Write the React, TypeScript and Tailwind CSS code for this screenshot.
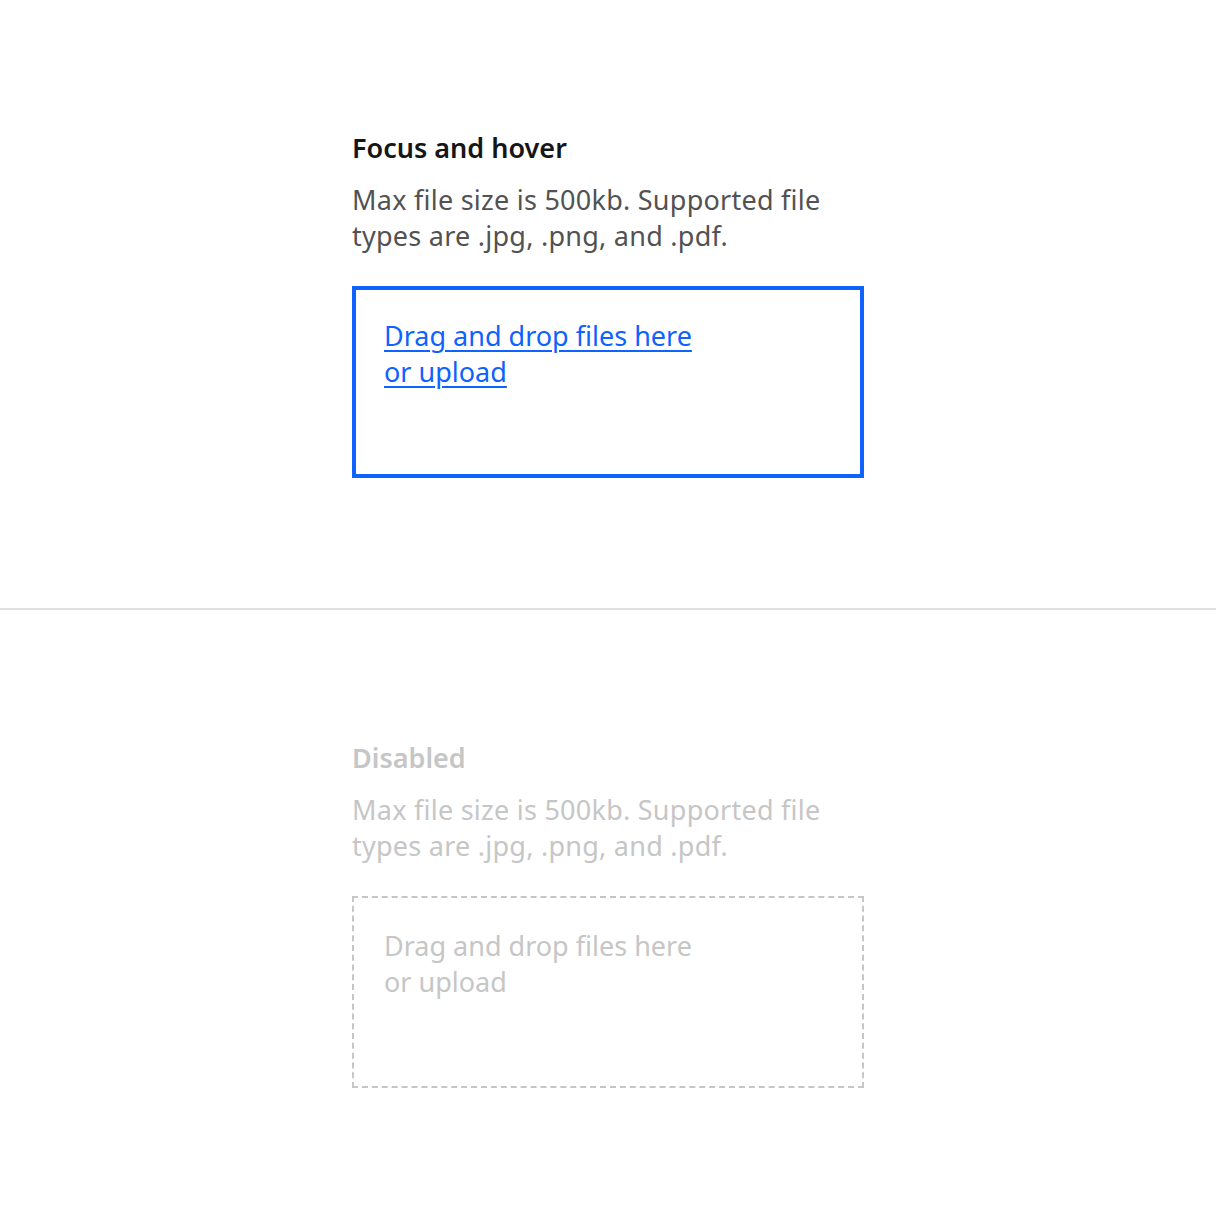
export default function App() {
  return (
    <div className="min-h-screen w-full bg-white font-['Noto_Sans',sans-serif]">
      <section className="h-[608px] pl-[352px] pt-[130px]">
        <h2 className="text-[27px] leading-[36px] font-semibold text-[#161616]">
          Focus and hover
        </h2>
        <p className="mt-4 text-[27px] leading-[36px] tracking-[0.25px] text-[#525252]">
          Max file size is 500kb. Supported file
          <br />
          types are .jpg, .png, and .pdf.
        </p>
        <div className="mt-8 h-[192px] w-[512px] border-[4px] border-[#0f62fe] px-7 pt-7">
          <a
            href="#"
            className="text-[27px] leading-[36px] text-[#0f62fe] underline underline-offset-[4px] decoration-[2px]"
          >
            Drag and drop files here
            <br />
            or upload
          </a>
        </div>
      </section>
      <div className="h-[2px] w-full bg-[#e0e0e0]" />
      <section className="h-[606px] pl-[352px] pt-[130px]">
        <h2 className="text-[27px] leading-[36px] font-semibold text-[#c6c6c6]">
          Disabled
        </h2>
        <p className="mt-4 text-[27px] leading-[36px] tracking-[0.25px] text-[#c6c6c6]">
          Max file size is 500kb. Supported file
          <br />
          types are .jpg, .png, and .pdf.
        </p>
        <div className="mt-8 h-[192px] w-[512px] border-2 border-dashed border-[#c6c6c6] px-[30px] pt-[30px]">
          <p className="text-[27px] leading-[36px] text-[#c6c6c6]">
            Drag and drop files here
            <br />
            or upload
          </p>
        </div>
      </section>
    </div>
  );
}
